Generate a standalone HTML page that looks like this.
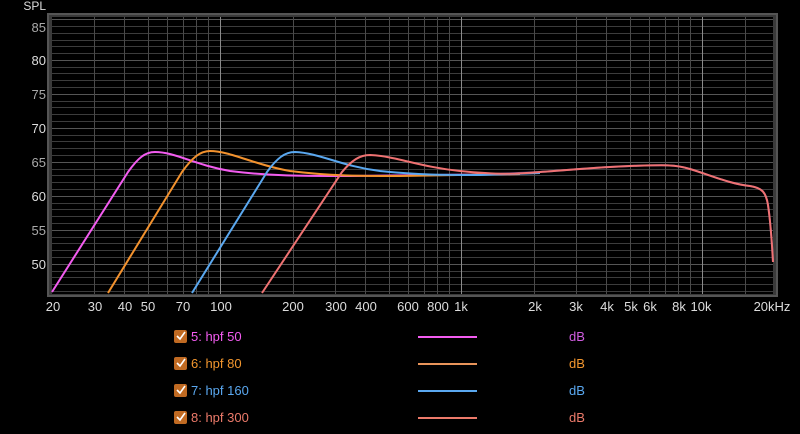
<!DOCTYPE html>
<html><head><meta charset="utf-8"><style>
html,body{margin:0;padding:0;background:#000;width:800px;height:434px;overflow:hidden}
svg{display:block}
text{font-family:"Liberation Sans",sans-serif}
</style></head><body>
<svg width="800" height="434" viewBox="0 0 800 434">
<rect width="800" height="434" fill="#000"/>
<rect x="47" y="13" width="731" height="284" fill="#555"/>
<rect x="49" y="15" width="727" height="280" fill="#3a3a3a"/>
<rect x="52" y="17" width="721" height="277" fill="#000"/>
<g stroke="#3c3c3c" stroke-width="1">
<path d="M52 26.5H773M52 33.5H773M52 40.5H773M52 46.5H773M52 53.5H773M52 67.5H773M52 73.5H773M52 80.5H773M52 87.5H773M52 101.5H773M52 107.5H773M52 114.5H773M52 121.5H773M52 135.5H773M52 141.5H773M52 148.5H773M52 155.5H773M52 169.5H773M52 175.5H773M52 182.5H773M52 189.5H773M52 203.5H773M52 209.5H773M52 216.5H773M52 223.5H773M52 237.5H773M52 243.5H773M52 250.5H773M52 257.5H773M52 271.5H773M52 277.5H773M52 284.5H773M52 291.5H773"/>
</g>
<g stroke="#555" stroke-width="1">
<path d="M52 60.5H773M52 94.5H773M52 128.5H773M52 162.5H773M52 196.5H773M52 230.5H773M52 264.5H773M52 19.5H773"/>
</g>
<g stroke="#4a4a4a" stroke-width="1">
<path d="M94.5 17V294M124.5 17V294M148.5 17V294M167.5 17V294M183.5 17V294M196.5 17V294M208.5 17V294M293.5 17V294M335.5 17V294M365.5 17V294M389.5 17V294M408.5 17V294M424.5 17V294M437.5 17V294M449.5 17V294M534.5 17V294M576.5 17V294M606.5 17V294M630.5 17V294M649.5 17V294M665.5 17V294M678.5 17V294M690.5 17V294M745.5 17V294"/>
</g>
<g stroke="#8a8a8a" stroke-width="1">
<path d="M220.5 17V294M461.5 17V294M702.5 17V294"/>
</g>
<g font-size="13" fill="#aaa" text-anchor="end">
<text x="46" y="10" fill="#ddd" font-size="12">SPL</text>
<text x="46" y="32">85</text>
<text x="46" y="65" fill="#ddd">80</text>
<text x="46" y="99">75</text>
<text x="46" y="133" fill="#ddd">70</text>
<text x="46" y="167">65</text>
<text x="46" y="201" fill="#ddd">60</text>
<text x="46" y="235">55</text>
<text x="46" y="269" fill="#ddd">50</text>
</g>
<g font-size="13" fill="#ddd" text-anchor="middle">
<text x="53" y="311">20</text><text x="95" y="311">30</text><text x="125" y="311">40</text><text x="148" y="311">50</text><text x="183" y="311">70</text><text x="221" y="311">100</text><text x="293" y="311">200</text><text x="336" y="311">300</text><text x="366" y="311">400</text><text x="408" y="311">600</text><text x="438" y="311">800</text><text x="461" y="311">1k</text><text x="535" y="311">2k</text><text x="576" y="311">3k</text><text x="607" y="311">4k</text><text x="631" y="311">5k</text><text x="650" y="311">6k</text><text x="679" y="311">8k</text><text x="701" y="311">10k</text><text x="772" y="311">20kHz</text>
</g>
<g fill="none" stroke-width="2">
<path stroke="#8a6aff" opacity="0.5" d="M461 175 C500 174,520 173,540 172 C570 170,600 167,630 166 C660 165,675 164,690 169 C710 175,730 184,750 186 C762 188,766 192,768 205 C771 225,772 245,773 262"/>
<path stroke="#f35cf0" d="M52 292 L128 172 C138 158,145 152,155 152 C175 152,195 165,230 171 C270 176,300 176,350 176 L520 174"/>
<path stroke="#f3922e" d="M108 293 L182 172 C192 158,200 151,210 151 C230 151,255 165,290 171 C330 176,360 176,400 176 L520 174"/>
<path stroke="#5aa8f0" d="M192 293 L267 172 C277 158,285 152,295 152 C320 153,340 166,380 171 C420 175,440 175,480 175 L540 173"/>
<path stroke="#ef7272" d="M262 293 L342 172 C352 160,360 155,370 155 C395 156,420 167,460 171 C500 175,515 174,540 172 C570 170,600 167,630 166 C660 165,675 164,690 169 C710 175,730 184,750 186 C762 188,766 192,768 205 C771 225,772 245,773 262"/>
</g>
<g font-size="13">
<rect x="174" y="330" width="13" height="13" rx="2" fill="#c06a22"/><path d="M177 336 l3 3 l5 -7" stroke="#fff" stroke-width="1.6" fill="none"/>
<text x="191" y="341" fill="#f35cf0">5: hpf 50</text>
<line x1="418" y1="337" x2="477" y2="337" stroke="#f35cf0" stroke-width="2"/>
<text x="569" y="341" fill="#d05ce0">dB</text>
<rect x="174" y="357" width="13" height="13" rx="2" fill="#c06a22"/><path d="M177 363 l3 3 l5 -7" stroke="#fff" stroke-width="1.6" fill="none"/>
<text x="191" y="368" fill="#f2962e">6: hpf 80</text>
<line x1="418" y1="364" x2="477" y2="364" stroke="#e8945a" stroke-width="2"/>
<text x="569" y="368" fill="#f2962e">dB</text>
<rect x="174" y="384" width="13" height="13" rx="2" fill="#c06a22"/><path d="M177 390 l3 3 l5 -7" stroke="#fff" stroke-width="1.6" fill="none"/>
<text x="191" y="395" fill="#5aa8f0">7: hpf 160</text>
<line x1="418" y1="391" x2="477" y2="391" stroke="#5aa8f0" stroke-width="2"/>
<text x="569" y="395" fill="#5aa8f0">dB</text>
<rect x="174" y="411" width="13" height="13" rx="2" fill="#c06a22"/><path d="M177 417 l3 3 l5 -7" stroke="#fff" stroke-width="1.6" fill="none"/>
<text x="191" y="422" fill="#ec7a6a">8: hpf 300</text>
<line x1="418" y1="418" x2="477" y2="418" stroke="#ec7a6a" stroke-width="2"/>
<text x="569" y="422" fill="#ec7a6a">dB</text>
</g>
</svg>
</body></html>
